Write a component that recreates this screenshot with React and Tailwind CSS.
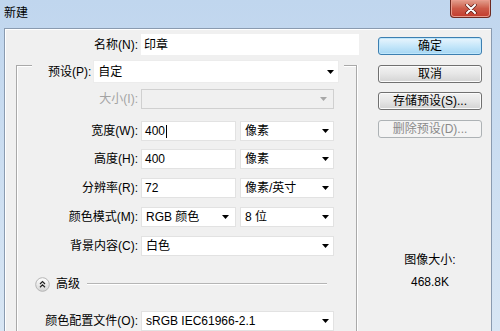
import React from "react";

const Arrow = ({ gray }) => (
  <svg width="7" height="4" viewBox="0 0 7 4" className="shrink-0">
    <path d="M0 0 H7 L3.5 4 Z" fill={gray ? "#a8a8a8" : "#000"} />
  </svg>
);

const Select = ({ w, value, disabled, arrowPad = "pr-[4px]" }) => (
  <div
    className={`${w} h-[20px] flex items-center justify-between pl-[4px] ${arrowPad} border ${
      disabled ? "bg-[#f0f0f0] border-[#d0d0d0]" : "bg-white border-[#e2e2e2]"
    }`}
  >
    <span className="leading-[14px] whitespace-nowrap">{value}</span>
    <Arrow gray={disabled} />
  </div>
);

const Input = ({ w, value, cursor }) => (
  <div className={`${w} h-[20px] flex items-center pl-[3px] bg-white border border-[#e2e2e2]`}>
    <span className="leading-[14px]">{value}</span>
    {cursor && <span className="w-px h-[13px] bg-black ml-px" />}
  </div>
);

const Row = ({ label, children, mt, gray }) => (
  <div className={`flex items-center ${mt}`}>
    <div className={`w-[122px] text-right pr-[1px] whitespace-nowrap ${gray ? "text-[#a3a3a3]" : ""}`}>{label}</div>
    <div className="flex gap-[4px] ml-[2px]">{children}</div>
  </div>
);

const Btn = ({ children, primary, disabled, mt }) => (
  <div
    className={`${mt} h-[18px] w-[104px] rounded-[3px] border flex items-center justify-center leading-[14px] ${
      primary
        ? "border-[#3c7fb1] bg-gradient-to-b from-[#e9f5fd] via-[#c6e7fa] to-[#a5d6f3] shadow-[inset_0_0_0_1px_#bfe6fb]"
        : disabled
        ? "border-[#adb2b5] bg-[#f4f4f4] text-[#8a8a8a]"
        : "border-[#707070] bg-gradient-to-b from-[#f2f2f2] via-[#e6e6e6] to-[#d3d3d3] shadow-[inset_0_0_0_1px_#fbfbfb]"
    }`}
  >
    {children}
  </div>
);

export default function App() {
  return (
    <div className="w-[500px] h-[331px] overflow-hidden flex flex-col bg-gradient-to-b from-[#c0d6ee] to-[#d8e6f4] text-[12px] text-black font-['Liberation_Sans','Noto_Sans_CJK_SC',sans-serif]">
      <div className="h-[28px] shrink-0 flex items-start justify-between">
        <span className="pl-[4px] pt-[6px] leading-[14px]">新建</span>
        <div className="mr-[9px] w-[41px] h-[18px] rounded-b-[4px] border border-t-0 border-[#6e2a22] bg-gradient-to-b from-[#e2a08f] via-[#cc5a48] to-[#c23a2c] flex items-center justify-center shadow-[inset_0_0_0_1px_#e99b8c]">
          <svg width="12" height="10" viewBox="0 0 12 10">
            <path d="M2 1 L10 9 M10 1 L2 9" stroke="#5a1a14" strokeWidth="3.4" strokeLinecap="round" />
            <path d="M2 1 L10 9 M10 1 L2 9" stroke="#fff" strokeWidth="2" strokeLinecap="round" />
          </svg>
        </div>
      </div>
      <div className="flex flex-1 min-h-0">
        <div className="w-[4px] shrink-0" />
        <div className="flex-1 bg-[#f0f0f0] border-l border-t border-r border-[#8a9bb0] flex shadow-[inset_1px_1px_0_#ffffff]">
          {/* left column */}
          <div className="w-[357px] shrink-0 flex flex-col">
            <div className="flex items-center mt-[5px]">
              <div className="w-[135px] text-right pr-[2px]">名称(N):</div>
              <div className="ml-[1px] w-[218px] h-[21px] bg-white flex items-center pl-[3px]">
                <span className="leading-[14px]">印章</span>
              </div>
            </div>
            <div className="ml-[11px] mt-[10px] w-[342px] border border-r-0 border-b-0 border-[#a9a9a9] shadow-[inset_1px_1px_0_#ffffff] flex">
              <div className="flex-1 flex flex-col">
                <div className="-mt-[6px] ml-[15px] w-[312px] flex items-center bg-[#f0f0f0] pl-[16px]">
                  <span className="whitespace-nowrap">预设(P):</span>
                  <div className="ml-[2px] w-[246px] h-[23px] bg-white border border-[#ececec] flex items-center justify-between pl-[4px] pr-[4px]">
                    <span className="leading-[14px]">自定</span>
                    <Arrow />
                  </div>
                </div>
                <Row label="大小(I):" mt="mt-[6px]" gray>
                  <Select w="w-[193px]" value="" disabled arrowPad="pr-[6px]" />
                </Row>
                <Row label="宽度(W):" mt="mt-[12px]">
                  <Input w="w-[95px]" value="400" cursor />
                  <Select w="w-[94px]" value="像素" />
                </Row>
                <Row label="高度(H):" mt="mt-[8px]">
                  <Input w="w-[95px]" value="400" />
                  <Select w="w-[94px]" value="像素" />
                </Row>
                <Row label="分辨率(R):" mt="mt-[9px]">
                  <Input w="w-[95px]" value="72" />
                  <Select w="w-[94px]" value="像素/英寸" />
                </Row>
                <Row label="颜色模式(M):" mt="mt-[9px]">
                  <Select w="w-[95px]" value="RGB 颜色" arrowPad="pr-[6px]" />
                  <Select w="w-[94px]" value="8 位" />
                </Row>
                <Row label="背景内容(C):" mt="mt-[9px]">
                  <Select w="w-[193px]" value="白色" />
                </Row>
                <div className="mt-[18px] h-[20px] flex items-center pl-[18px]">
                  <svg width="15" height="15" viewBox="0 0 15 15" className="shrink-0">
                    <defs>
                      <linearGradient id="cg" x1="0" y1="0" x2="0" y2="1">
                        <stop offset="0" stopColor="#ffffff" />
                        <stop offset="1" stopColor="#d4d4d4" />
                      </linearGradient>
                    </defs>
                    <circle cx="7.5" cy="7.5" r="6.8" fill="url(#cg)" stroke="#b4b4b4" strokeWidth="1" />
                    <path d="M5 7 L7.5 4.6 L10 7 M5 10.2 L7.5 7.8 L10 10.2" fill="none" stroke="#222" strokeWidth="1.2" />
                  </svg>
                  <span className="ml-[6px] whitespace-nowrap">高级</span>
                  <div className="ml-[7px] w-[240px] h-[2px] border-t border-[#b5b5b5] border-b border-b-white" />
                </div>
                <Row label="颜色配置文件(O):" mt="mt-[17px]">
                  <Select w="w-[193px]" value="sRGB IEC61966-2.1" />
                </Row>
              </div>
              <div className="w-[2px] border-l border-[#a9a9a9] border-r border-r-white self-stretch -mt-px" />
            </div>
          </div>
          {/* right column */}
          <div className="ml-[16px] w-[104px] flex flex-col items-center">
            <Btn primary mt="mt-[8px]">确定</Btn>
            <Btn mt="mt-[10px]">取消</Btn>
            <Btn mt="mt-[9px]">存储预设(S)...</Btn>
            <Btn disabled mt="mt-[10px]">删除预设(D)...</Btn>
            <div className="mt-[114px] leading-[16px]">图像大小:</div>
            <div className="mt-[6px] leading-[16px]">468.8K</div>
          </div>
        </div>
        <div className="w-[8px] shrink-0" />
      </div>
    </div>
  );
}
